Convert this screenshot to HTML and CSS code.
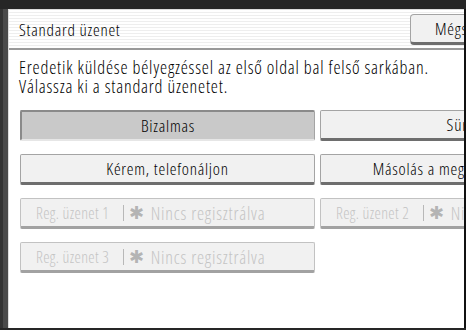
FILE: index.html
```html
<!DOCTYPE html>
<html lang="hu">
<head>
  <meta charset="UTF-8" />
  <title>Standard üzenet</title>
  <link rel="stylesheet" href="styles.css">
</head>
<body>
  <div class="screen">
    <div class="edge-left"></div>
    <div class="panel">
      <div class="header">
        <div class="title">Standard üzenet</div>
        <button class="btn header-btn">Mégse</button>
      </div>

      <p class="message">
        Eredetik küldése bélyegzéssel az első oldal bal felső sarkában.<br>
        Válassza ki a standard üzenetet.
      </p>

      <div class="choices">
        <button class="btn selected">Bizalmas</button>
        <button class="btn">Sürgős</button>
        <button class="btn">Kérem, telefonáljon</button>
        <button class="btn">Másolás a megf. személyeknek</button>
        <button class="btn disabled">
          <span class="reg">Reg. üzenet 1</span><span class="sep"></span><span class="star">&#10033;</span><span class="none">Nincs regisztrálva</span>
        </button>
        <button class="btn disabled">
          <span class="reg">Reg. üzenet 2</span><span class="sep"></span><span class="star">&#10033;</span><span class="none">Nincs regisztrálva</span>
        </button>
        <button class="btn disabled">
          <span class="reg">Reg. üzenet 3</span><span class="sep"></span><span class="star">&#10033;</span><span class="none">Nincs regisztrálva</span>
        </button>
      </div>
    </div>
    <div class="edge-right"></div>
  </div>
</body>
</html>
```

FILE: styles.css
```css
* {
  box-sizing: border-box;
  margin: 0;
  padding: 0;
}

html, body {
  width: 466px;
  height: 330px;
  overflow: hidden;
  background-color: #262626;
  font-family: 'Open Sans', 'DejaVu Sans Condensed', sans-serif;
  font-stretch: 75%;
  font-weight: 300;
  letter-spacing: 0.75px;
  color: #000;
}

.screen {
  display: flex;
  height: 328px;
  padding-top: 9px;
}

.edge-left {
  width: 8px;
  background: linear-gradient(to right, #333 0 3px, #4a4a4a 3px 8px);
}

.edge-right {
  width: 2px;
  background-color: #111;
}

/* Main white panel */
.panel {
  flex: 1;
  background-color: #fff;
  border-top: 1px solid #ddd;
  border-left: 1px solid #ddd;
  overflow: hidden;
}

.header {
  display: flex;
  align-items: center;
  justify-content: space-between;
  width: 520px;
  height: 40px;
  padding: 0 8px 0 10px;
  background: repeating-linear-gradient(to bottom, #fff 0 2px, #eeeeee 2px 3px);
  border-bottom: 2px solid #9a9a9a;
}

.title {
  font-size: 17px;
  padding-top: 1px;
}

.message {
  font-size: 18px;
  line-height: 19px;
  letter-spacing: 0.8px;
  padding: 8px 0 0 10px;
  height: 60px;
}

/* Button grid */
.choices {
  display: grid;
  grid-template-columns: 295px 295px;
  grid-auto-rows: 31px;
  column-gap: 5px;
  row-gap: 13px;
  padding-left: 11px;
}

.btn {
  font-family: inherit;
  font-stretch: inherit;
  font-weight: inherit;
  letter-spacing: inherit;
  font-size: 17px;
  color: #000;
  background-color: #f1f1f1;
  border: 1px solid #a4a4a4;
  border-bottom: 3px solid #6e6e6e;
  border-radius: 2px;
  text-align: center;
  white-space: nowrap;
  overflow: hidden;
}

.header-btn {
  width: 111px;
  height: 31px;
  margin-top: 1px;
  border-radius: 4px;
  text-align: left;
  padding-left: 24px;
}

.btn.selected {
  background-color: #c9c9c9;
  border-top: 2px solid #8a8a8a;
  border-left: 2px solid #8a8a8a;
  border-bottom: 2px solid #e6e6e6;
}

.btn.disabled {
  display: flex;
  align-items: center;
  text-align: left;
  color: #c4c4c4;
  border-color: #c2c2c2;
  border-bottom-color: #a2a2a2;
  padding-left: 15px;
}

.reg {
  flex-shrink: 0;
  width: 87px;
  font-size: 16px;
  letter-spacing: 0.35px;
}

.sep {
  flex-shrink: 0;
  width: 1px;
  height: 16px;
  background-color: #b8b8b8;
  margin-right: 5px;
}

.star {
  font-family: 'DejaVu Sans', sans-serif;
  font-size: 18px;
  color: #b4b4b4;
  margin-right: 6px;
}

.none {
  font-size: 18px;
  letter-spacing: 0.8px;
}
```
